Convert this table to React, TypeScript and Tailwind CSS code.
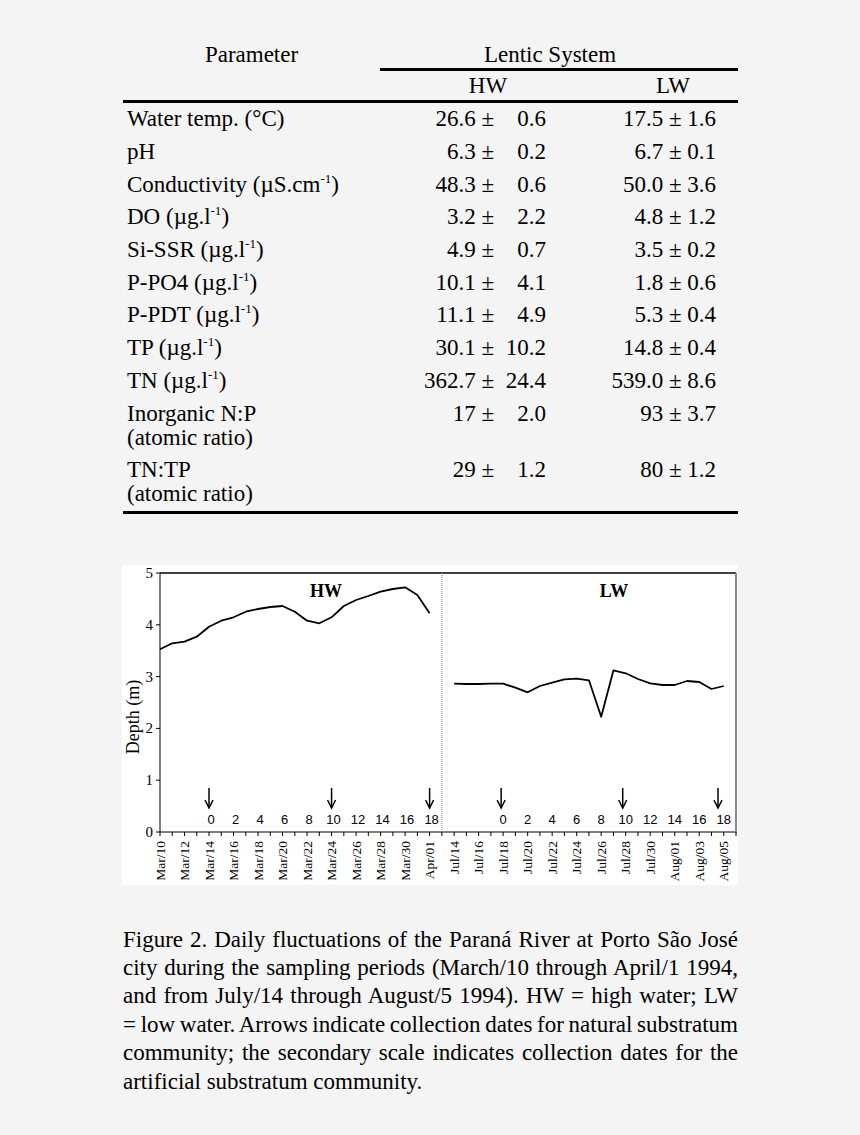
import React from "react";

type Row = {
  label: React.ReactNode;
  sub?: string;
  hw: string;
  hwSd: string;
  lw: string;
};

const Sup = () => <sup className="text-[13px] -top-[9px]">-1</sup>;

const rows: Row[] = [
  { label: "Water temp. (°C)", hw: "26.6", hwSd: "0.6", lw: "17.5 ± 1.6" },
  { label: "pH", hw: "6.3", hwSd: "0.2", lw: "6.7 ± 0.1" },
  {
    label: (
      <>
        Conductivity (µS.cm<Sup />)
      </>
    ),
    hw: "48.3",
    hwSd: "0.6",
    lw: "50.0 ± 3.6",
  },
  { label: <>DO (µg.l<Sup />)</>, hw: "3.2", hwSd: "2.2", lw: "4.8 ± 1.2" },
  { label: <>Si-SSR (µg.l<Sup />)</>, hw: "4.9", hwSd: "0.7", lw: "3.5 ± 0.2" },
  { label: <>P-PO4 (µg.l<Sup />)</>, hw: "10.1", hwSd: "4.1", lw: "1.8 ± 0.6" },
  { label: <>P-PDT (µg.l<Sup />)</>, hw: "11.1", hwSd: "4.9", lw: "5.3 ± 0.4" },
  { label: <>TP (µg.l<Sup />)</>, hw: "30.1", hwSd: "10.2", lw: "14.8 ± 0.4" },
  { label: <>TN (µg.l<Sup />)</>, hw: "362.7", hwSd: "24.4", lw: "539.0 ± 8.6" },
  { label: "Inorganic N:P", sub: "(atomic ratio)", hw: "17", hwSd: "2.0", lw: "93 ± 3.7" },
  { label: "TN:TP", sub: "(atomic ratio)", hw: "29", hwSd: "1.2", lw: "80 ± 1.2" },
];

// chart geometry (svg coords, origin at white box corner)
const X0 = 38;
const X1 = 614;
const Y0 = 8;
const YB = 267;
const DX = (X1 - X0) / 47;
const UNIT = (YB - Y0) / 5;
const xi = (i: number) => X0 + i * DX;

const hwData = [
  84.3, 78.3, 76.7, 71.7, 61.7, 55.7, 52.3, 46.7, 44, 42, 41, 46.7, 55.7, 58.3,
  52.3, 41, 35, 31, 26.7, 24, 22.3, 30, 48.3,
];
const lwData = [
  118.7, 119, 119, 118.7, 118.7, 122.7, 127.3, 121, 117.7, 114.3, 113.7, 115.3,
  151.7, 105.3, 108.3, 114, 118.3, 120, 120, 116, 117, 124, 121,
];

const hwLabels = [
  "Mar/10", "Mar/12", "Mar/14", "Mar/16", "Mar/18", "Mar/20",
  "Mar/22", "Mar/24", "Mar/26", "Mar/28", "Mar/30", "Apr/01",
];
const lwLabels = [
  "Jul/14", "Jul/16", "Jul/18", "Jul/20", "Jul/22", "Jul/24",
  "Jul/26", "Jul/28", "Jul/30", "Aug/01", "Aug/03", "Aug/05",
];

const scaleNums = [0, 2, 4, 6, 8, 10, 12, 14, 16, 18];

function Arrow({ x }: { x: number }) {
  return (
    <g stroke="#000" strokeWidth={1.5} fill="none">
      <line x1={x} y1={223} x2={x} y2={242} />
      <polyline points={`${x - 4},235 ${x},243 ${x + 4},235`} />
    </g>
  );
}

function DepthChart() {
  const hwPts = hwData.map((y, i) => `${xi(i)},${y}`).join(" ");
  const lwPts = lwData.map((y, i) => `${xi(24 + i)},${y}`).join(" ");
  return (
    <svg width="616" height="320" viewBox="0 0 616 320">
      {/* frame */}
      <line x1={X0} y1={Y0} x2={X1} y2={Y0} stroke="#000" strokeWidth={1.3} />
      <line x1={X0} y1={Y0} x2={X0} y2={YB} stroke="#000" strokeWidth={1} />
      <line x1={X0} y1={YB} x2={X1 + 1} y2={YB} stroke="#000" strokeWidth={1} />
      <line x1={X1} y1={Y0} x2={X1} y2={YB} stroke="#888" strokeWidth={2} />
      <line
        x1={xi(23)}
        y1={Y0}
        x2={xi(23)}
        y2={YB}
        stroke="#777"
        strokeWidth={1}
        strokeDasharray="1 1"
      />

      {/* y axis */}
      {[0, 1, 2, 3, 4, 5].map((v) => (
        <g key={v}>
          <line x1={X0 - 4} y1={YB - v * UNIT} x2={X0} y2={YB - v * UNIT} stroke="#000" />
          <text
            x={31}
            y={YB - v * UNIT + 5}
            textAnchor="end"
            fontFamily="Liberation Serif"
            fontSize={15}
          >
            {v}
          </text>
        </g>
      ))}
      <text
        transform="translate(17,152) rotate(-90)"
        textAnchor="middle"
        fontFamily="Liberation Serif"
        fontSize={18}
      >
        Depth (m)
      </text>

      {/* x ticks */}
      {Array.from({ length: 48 }).map((_, i) => (
        <line key={i} x1={xi(i)} y1={YB} x2={xi(i)} y2={YB + 4} stroke="#000" />
      ))}
      {hwLabels.map((l, k) => (
        <text
          key={l}
          transform={`translate(${xi(k * 2) + 4.5},276) rotate(-90)`}
          textAnchor="end"
          fontFamily="Liberation Serif"
          fontSize={13.5}
        >
          {l}
        </text>
      ))}
      {lwLabels.map((l, k) => (
        <text
          key={l}
          transform={`translate(${xi(24 + k * 2) + 4.5},276) rotate(-90)`}
          textAnchor="end"
          fontFamily="Liberation Serif"
          fontSize={13.5}
        >
          {l}
        </text>
      ))}

      {/* panel titles */}
      <text x={204} y={32} textAnchor="middle" fontFamily="Liberation Serif" fontWeight="bold" fontSize={18}>
        HW
      </text>
      <text x={492} y={32} textAnchor="middle" fontFamily="Liberation Serif" fontWeight="bold" fontSize={18}>
        LW
      </text>

      {/* secondary scale */}
      {scaleNums.map((n) => (
        <text
          key={`h${n}`}
          x={xi(4 + n) + 2}
          y={259}
          textAnchor="middle"
          fontFamily="Liberation Sans"
          fontSize={13}
        >
          {n}
        </text>
      ))}
      {scaleNums.map((n) => (
        <text
          key={`l${n}`}
          x={xi(28 + n)}
          y={259}
          textAnchor="middle"
          fontFamily="Liberation Sans"
          fontSize={13}
        >
          {n}
        </text>
      ))}

      {/* collection arrows */}
      <Arrow x={xi(4)} />
      <Arrow x={xi(14)} />
      <Arrow x={xi(22)} />
      <Arrow x={xi(28) - 2} />
      <Arrow x={xi(38) - 3} />
      <Arrow x={596} />

      {/* series */}
      <polyline points={hwPts} fill="none" stroke="#000" strokeWidth={1.8} strokeLinejoin="round" />
      <polyline points={lwPts} fill="none" stroke="#000" strokeWidth={1.8} strokeLinejoin="round" />
    </svg>
  );
}

const caption = [
  "Figure 2. Daily fluctuations of the Paraná River at Porto São José",
  "city during the sampling periods (March/10 through April/1 1994,",
  "and from July/14 through August/5 1994). HW = high water; LW",
  "= low water. Arrows indicate collection dates for natural substratum",
  "community; the secondary scale indicates collection dates for the",
];

export default function App() {
  return (
    <div className="w-[860px] h-[1135px] bg-[#f4f4f4] font-['Liberation_Serif',serif] text-black">
      <div className="w-[738px] pl-[123px] pt-[41px]">
        {/* table header */}
        <div className="flex items-start text-[23px] leading-[24px]">
          <div className="w-[257px] h-[27px] flex items-center justify-center">Parameter</div>
          <div className="flex-1 h-[30px] flex items-center justify-center pr-[18px] border-b-[3px] border-black">
            Lentic System
          </div>
        </div>
        <div className="flex h-[32px] items-center border-b-[3px] border-black text-[23px] leading-[24px]">
          <div className="w-[257px]" />
          <div className="w-[216px] text-center">HW</div>
          <div className="flex-1 text-center pl-[12px]">LW</div>
        </div>

        {/* table body */}
        <div className="border-b-[3px] border-black text-[23px] leading-[24px]">
          {rows.map((r, i) => (
            <div key={i} className="flex items-start py-[4.35px] whitespace-nowrap">
              <div className="w-[250px] pl-[4px]">
                <div>{r.label}</div>
                {r.sub && <div>{r.sub}</div>}
              </div>
              <div className="w-[121px] text-right">{r.hw} ±</div>
              <div className="w-[52px] text-right">{r.hwSd}</div>
              <div className="w-[170px] text-right">{r.lw}</div>
            </div>
          ))}
        </div>

        {/* figure */}
        <div className="mt-[51px] -ml-[1px] w-[616px] h-[320px] bg-white">
          <DepthChart />
        </div>

        {/* caption */}
        <div className="mt-[41px] w-[615px] text-[23px] leading-[28.4px]">
          {caption.map((line) => (
            <div
              key={line}
              className="whitespace-nowrap text-justify [text-align-last:justify] [word-spacing:-2px]"
            >
              {line}
            </div>
          ))}
          <div>artificial substratum community.</div>
        </div>
      </div>
    </div>
  );
}
